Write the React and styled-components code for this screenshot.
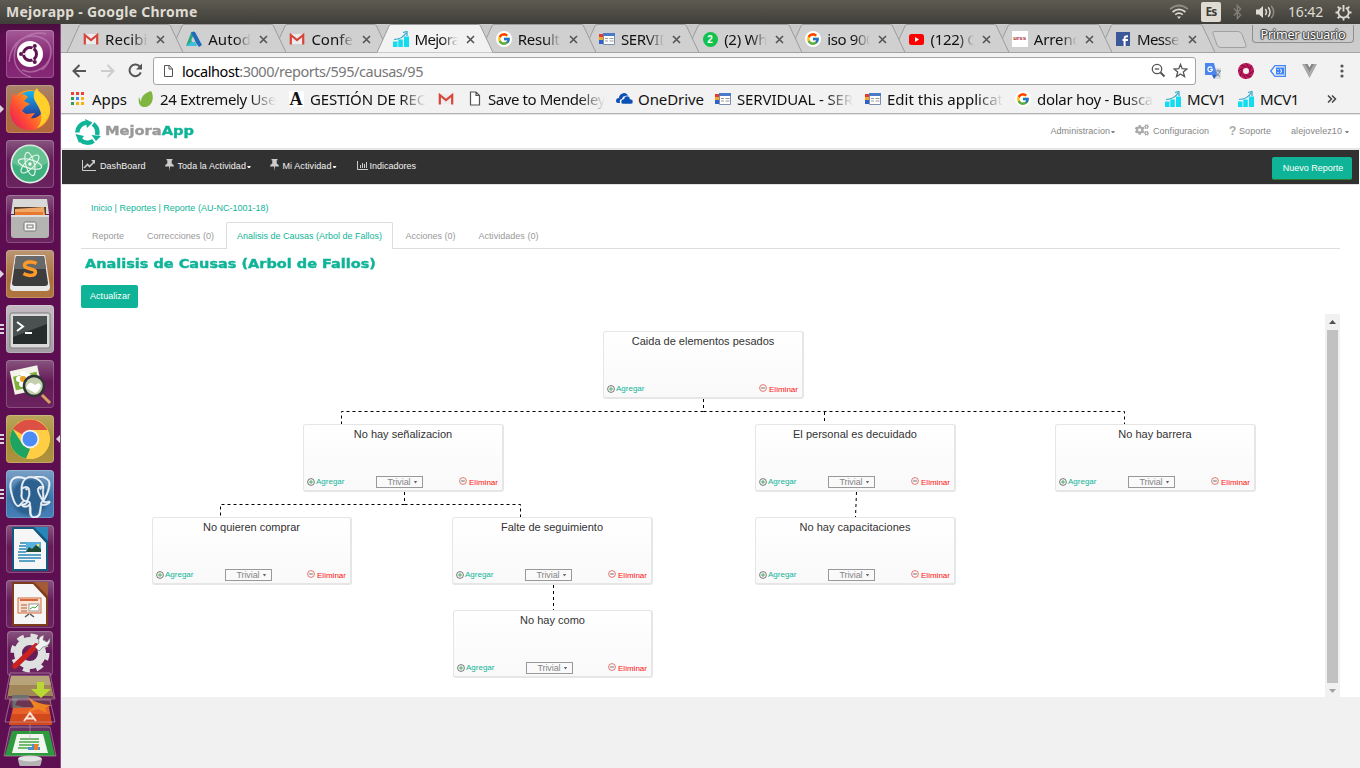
import React, { useLayoutEffect, useRef, useState } from "react";
import styled, { createGlobalStyle, css } from "styled-components";
import { FaCogs } from "react-icons/fa";
import { FcGoogle } from "react-icons/fc";
import { SiPostgresql } from "react-icons/si";

const teal = "#0fb498";
const ui = '"Noto Sans", "Open Sans", sans-serif';

const Global = createGlobalStyle`
  * { box-sizing: border-box; }
  html, body, #root { height: 100%; }
  body { margin: 0; overflow: hidden; font-family: "Liberation Sans", Arial, sans-serif; background: #f1f1f1; }
  svg { display: block; flex: none; }
`;

/* Text set to an exact width, by its letter spacing or, with `stretch`, by wider letters. */
const FitSpan = styled.span`
  display: block;
  flex: none;
  white-space: pre;
  width: ${(p) => p.$w}px;
  transform-origin: 0 50%;
`;
function Fit({ w, stretch, children }) {
  const ref = useRef(null);
  const [style, setStyle] = useState({});
  useLayoutEffect(() => {
    const range = document.createRange();
    range.selectNodeContents(ref.current);
    const natural = range.getBoundingClientRect().width;
    setStyle(
      stretch
        ? { transform: `scaleX(${w / natural})` }
        : { letterSpacing: (w - natural) / ref.current.textContent.length }
    );
  }, []);
  return (
    <FitSpan ref={ref} $w={w} style={style}>
      {children}
    </FitSpan>
  );
}

const Screen = styled.div`
  width: 1360px;
  height: 768px;
  display: flex;
  flex-direction: column;
  overflow: hidden;
`;

/* ---------- system bar ---------- */
const SystemBar = styled.header`
  height: 24px;
  flex: none;
  display: flex;
  align-items: center;
  padding: 0 8px 0 6px;
  background: linear-gradient(#5d5b51, #3f3e39);
  color: #dfdbd2;
  font: 700 14px/22px ${ui};
`;
const Tray = styled.div`
  margin-left: auto;
  display: flex;
  align-items: center;
  font-weight: 400;
  font-size: 14px;
`;
const Lang = styled.div`
  width: 20px;
  height: 20px;
  margin: 0 12px 0 12px;
  border-radius: 2px;
  background: #dfdbd2;
  color: #3d3c37;
  font: 700 12px/20px ${ui};
  display: flex;
  justify-content: center;
`;
const TrayIcons = {
  wifi: (
    <svg width="20" height="16" viewBox="0 0 20 16" fill="none" stroke="#dfdbd2" strokeWidth="1.7">
      <path d="M1 5.2Q10-2.2 19 5.2" stroke="#8f8b83" />
      <path d="M3.6 8Q10 2.6 16.4 8" />
      <path d="M6.2 10.7Q10 7.4 13.8 10.7" />
      <path d="M8 12.4h4L10 15z" fill="#dfdbd2" stroke="none" />
    </svg>
  ),
  bt: (
    <svg width="9" height="16" viewBox="0 0 9 16" fill="none" stroke="#85827a" strokeWidth="1.3">
      <path d="M.7 4.4l7 6.6-3.4 3.6V1.400L7.700 5l-7 6.400" />
    </svg>
  ),
  volume: (
    <svg width="20" height="16" viewBox="0 0 20 16" fill="none" stroke="#dfdbd2" strokeWidth="1.5">
      <path d="M0 5.5h3L7 2v12l-4-3.500H0z" fill="#dfdbd2" stroke="none" />
      <path d="M9.300 5q2.400 3 0 6M12.200 3.300q3.700 4.700 0 9.400" />
      <path d="M15.200 1.700q5 6.300 0 12.600" stroke="#8f8b83" />
    </svg>
  ),
  power: (
    <svg width="17" height="17" viewBox="-8.500 -8.500 17 17" fill="none" stroke="#dfdbd2">
      <path d="M2.200-4.800A5.200 5.200 0 1 1-2.200-4.800" strokeWidth="1.800" />
      <path d="M0-7.500V-1" strokeWidth="1.800" />
      <path d="M5.500 0H8M-5.500 0H-8M0 5.500V8M4 4l1.800 1.800M-4 4l-1.800 1.800M4-4l1.800-1.800M-4-4l-1.800-1.800" strokeWidth="1.800" />
    </svg>
  ),
};

/* ---------- launcher ---------- */
const Body = styled.div`
  flex: 1;
  min-height: 0;
  display: flex;
`;
const Launcher = styled.nav`
  width: 61px;
  flex: none;
  padding: 6px 0 0 6px;
  background: linear-gradient(#4a0d3f, #5c0d50 12px, #5e0f52);
  border-right: 1px solid #874c7e;
  display: flex;
  flex-direction: column;
  gap: 7px;
  overflow: hidden;
`;
const Tile = styled.div`
  position: relative;
  width: 48px;
  height: 48px;
  flex: none;
  border-radius: 4px;
  background: ${(p) => p.$bg || "linear-gradient(#88557f, #651a58 45%, #6b245f)"};
  box-shadow: inset 0 0 0 1px rgba(255, 255, 255, 0.2);
`;
const ShortTile = styled(Tile)`
  width: 46px;
  height: 45px;
  margin-left: 4px;
  overflow: hidden;
`;
const Running = styled.span`
  position: absolute;
  left: -6px;
  top: 20px;
  width: 4px;
  height: 8px;
  background: #ddd3dc;
  ${(p) =>
    p.$many
      ? css`background: linear-gradient(#ddd3dc 2px, transparent 2px 4px, #ddd3dc 4px 6px, transparent 6px 8px, #ddd3dc 8px);height: 10px;top: 19px;`
      : css`clip-path: polygon(0 0, 100% 50%, 0 100%);`}
`;
const Focused = styled.span`
  position: absolute;
  right: -6px;
  top: 20px;
  width: 4px;
  height: 8px;
  background: #ddd3dc;
  clip-path: polygon(100% 0, 0 50%, 100% 100%);
`;
const Art = ({ children, h = 48 }) => (
  <svg width="48" height={h} viewBox={`0 0 48 ${h}`} fill="none">
    {children}
  </svg>
);
const Stack = styled.div`
  margin: -4px 0 0 -3px;
`;
const StackArt = styled.svg`
  margin-top: -4px;
  position: relative;
`;

const ubuntuArt = (
  <Art>
    <path d="M3 32C5 10 22 2 36 8s10 24 0 32M40 4C30 1 12 6 9 20s4 24 16 27M45 22C44 36 30 46 16 40" stroke="#c58cba" strokeWidth="1.500" opacity=".6" />
    <circle cx="24" cy="24" r="13" fill="#fff" />
    <circle cx="24" cy="24" r="6.500" stroke="#5e1650" strokeWidth="3" />
    <path d="M14 24h5M28.500 16L26 20M28.500 32L26 28" stroke="#fff" strokeWidth="1.300" />
    <circle cx="15" cy="24" r="2" fill="#5e1650" />
    <circle cx="28.800" cy="16" r="2" fill="#5e1650" />
    <circle cx="28.800" cy="32" r="2" fill="#5e1650" />
  </Art>
);
const firefoxArt = (
  <Art>
    <defs>
      <linearGradient id="fx" x1="1" y1="0" x2="0" y2=".8">
        <stop offset="0" stopColor="#ffe12e" /><stop offset=".4" stopColor="#ff9a1c" /><stop offset=".75" stopColor="#ff4a35" /><stop offset="1" stopColor="#e8205c" />
      </linearGradient>
      <linearGradient id="fb" x1="0" y1="0" x2="0" y2="1">
        <stop offset="0" stopColor="#12b5f5" /><stop offset="1" stopColor="#2a2f8c" />
      </linearGradient>
    </defs>
    <circle cx="24" cy="25" r="20" fill="url(#fx)" />
    <circle cx="25" cy="20" r="14" fill="url(#fb)" />
    <path d="M5 18L7 8l4 4 7-3 4 3-4 4 6 3-5 3-3 4 4 3 9-1-4 5c4 1 10-2 11-7 3-6-1-12-4-16C31 7 31 3 31 3c1 5 12 8 13 22 0 12-9 20-20 20S4 37 4 25z" fill="url(#fx)" />
    <path d="M31 3c1 6 13 9 13 23-1 8-7 15-13 17 8-9 4-18-2-27-3-6 0-11 2-13z" fill="#ffcf2c" />
  </Art>
);
const atomArt = (
  <Art>
    <circle cx="24" cy="24" r="19.500" fill="#e1efe6" />
    <circle cx="24" cy="24" r="17.800" fill="#3fb07f" />
    <path d="M6.500 23a17.500 17.500 0 0 1 35 0Q24 34 6.500 23z" fill="#81cf9e" opacity=".6" />
    <g stroke="#e8f5ed" strokeWidth="1.100">
      <ellipse cx="24" cy="24" rx="12" ry="4.300" transform="rotate(15 24 24)" />
      <ellipse cx="24" cy="24" rx="12" ry="4.300" transform="rotate(75 24 24)" />
      <ellipse cx="24" cy="24" rx="12" ry="4.300" transform="rotate(135 24 24)" />
    </g>
    <circle cx="24" cy="24" r="1.700" fill="#fff" />
  </Art>
);
const filesArt = (
  <Art>
    <path d="M7 4h34l2 15H5z" fill="#d9d9d7" />
    <path d="M8 12h32v9H8z" fill="#553b2a" />
    <path d="M9 14l29-2 1 8H9z" fill="#f0a868" /><path d="M9 17h28v3H9z" fill="#e8782e" />
    <path d="M5 20h38v20a3 3 0 0 1-3 3H8a3 3 0 0 1-3-3z" fill="#b4b4b2" />
    <path d="M5 20h38v2H5z" fill="#dededc" />
    <rect x="18" y="27" width="12" height="9" rx="1.500" fill="#f4f4f4" stroke="#777" />
    <rect x="21" y="30" width="6" height="3" stroke="#777" />
  </Art>
);
const sublimeArt = (
  <Art>
    <path d="M9 5h30l5 32q0 4-4 4H8q-4 0-4-4z" fill="#e8e8e8" />
    <path d="M10 6h28l4 27q0 3-3 3H9q-3 0-3-3z" fill="#3d3d3d" />
    <path d="M10 6h28l2 13H8z" fill="#686868" />
    <path d="M30.500 13.500c-4-2.500-12-2-12 2 0 4 11 2.500 11 6.500 0 4.500-8 4-12 1.500" stroke="#ff9a29" strokeWidth="3.500" />
  </Art>
);
const terminalArt = (
  <Art>
    <rect x="4" y="8" width="40" height="35" rx="2" fill="#d9d9d9" stroke="#7a7a7a" />
    <rect x="7" y="11" width="34" height="28" fill="#262b2b" />
    <path d="M7 11h34v8L7 32z" fill="#4b5050" />
    <path d="M11 17l6 4.500-6 4.500M19 28h7" stroke="#fff" strokeWidth="2" />
  </Art>
);
const viewerArt = (
  <Art>
    <g transform="rotate(-12 20 20)">
      <rect x="6" y="8" width="28" height="24" fill="#f3f3ea" />
      <rect x="8" y="14" width="24" height="14" fill="#7fb13b" />
    </g>
    <g fill="#fff"><circle cx="17" cy="14" r="3" /><circle cx="13" cy="19" r="3" /><circle cx="16" cy="24" r="3" /><circle cx="22" cy="16" r="3" /></g>
    <circle cx="17" cy="19" r="3" fill="#f0a020" />
    <circle cx="28" cy="26" r="10" fill="#c5cfae" stroke="#2f3436" strokeWidth="2.500" />
    <path d="M20 28q3-8 9-3 5-4 6 1-3 7-6 7z" fill="#fff" />
    <path d="M36 35l8 8" stroke="#d9a25a" strokeWidth="3" />
  </Art>
);
const chromeArt = (
  <Art>
    <circle cx="24" cy="24" r="20" fill="#ffce44" />
    <path d="M24 24L6.700 14a20 20 0 0 1 34.600 1H24z" fill="#dd5145" />
    <path d="M6.700 14L17 30l7 4-4 9.600A20 20 0 0 1 6.700 14z" fill="#1da362" />
    <path d="M41.500 15H24l8 14-9 15a20 20 0 0 0 18.500-29z" fill="#ffce44" />
    <circle cx="24" cy="24" r="9.200" fill="#f3f3f3" />
    <circle cx="24" cy="24" r="7.500" fill="#4c8bf5" />
  </Art>
);
const docArt = (a, b, body) => (
  <Art>
    <path d="M6 2h24l12 12v32H6z" fill={a} />
    <path d="M8 4h19l13 14v26H8z" fill="#f6f6f6" />
    <path d="M28 2h14v14z" fill={b} />
    {body}
  </Art>
);
const writerArt = docArt("#14577d", "#2a86b8", (
  <>
    <path d="M14 18h6M13 21h7M13 24h7M12 27h8M12 30h23M12 33h23M13 36h16" stroke="#2a86b8" strokeWidth="1.600" />
    <rect x="20" y="17" width="15" height="10" fill="#58b1e0" />
    <path d="M20 27l3-5 3 2 4-4 5 4v3z" fill="#1f4a33" /><circle cx="32" cy="20" r="1.300" fill="#ffe050" />
  </>
));
const impressArt = docArt("#7d3c1b", "#a35a36", (
  <>
    <rect x="12" y="18" width="23" height="15" fill="#fbe3d6" stroke="#d4693c" />
    <path d="M14 20h18" stroke="#d4693c" strokeWidth="2" /><path d="M15 25h6M15 28h6M15 31h6" stroke="#a35a36" />
    <rect x="23" y="24" width="10" height="7" fill="#fff" stroke="#777" strokeWidth=".7" />
    <path d="M24 29l3-2 2 1 3-3" stroke="#49a53b" /><path d="M23 34l-4 3M24 34l4 3" stroke="#555" strokeWidth="1.500" />
  </>
));
const settingsArt = (
  <Art h={45}>
    <circle cx="23" cy="22" r="12" stroke="#dfe1e0" strokeWidth="8" />
    <circle cx="23" cy="22" r="17.500" stroke="#dfe1e0" strokeWidth="4" strokeDasharray="7 6.744" />
    <path d="M8 35L29 15" stroke="#c9221f" strokeWidth="5.500" strokeLinecap="round" />
    <path d="M28 16l4-4q-2-6 5-8l-1 5 4 2 3-4q1 8-7 9l-4 4z" fill="#f1f1f1" stroke="#777" strokeWidth=".7" />
  </Art>
);
const stackArt = (
  <StackArt width="54" height="98" viewBox="3 672 54 98">
    <path d="M11 676h38l5 22H7z" fill="#a08658" /><path d="M11 676h38l2 9H9z" fill="#b8a47a" />
    <path d="M8 696h45l-4 12H11z" fill="#6b3450" />
    <path d="M37 682h7v7h7l-10 9-10-9h6z" fill="#b9d932" />
    <path d="M12 695h16l2 4H18l-3 6 8 2h8l-2 4H13z" fill="#6d7070" />
    <path d="M13 708l36-1 3 18H9z" fill="#e8602a" /><path d="M12 714h38l2 11H9z" fill="#d2491c" />
    <path d="M28 697q10 8 24 8l-7 3 2 5-9-4-12 4 8-6z" fill="#ef8223" />
    <path d="M24 721l6-8 6 8M26 718.500h8" stroke="#fbe3d6" strokeWidth="2" fill="none" />
    <path d="M11 725h38l6 31H5z" fill="#6b2f60" />
    <path d="M12 731h37l6 25H5z" fill="#2e9a3e" /><path d="M17 734h26l5 19H12z" fill="#f1f7ee" />
    <path d="M20 739h19M19 742h20M19 745h20M18 748h12" stroke="#4aa84a" strokeWidth="1.500" />
    <path d="M28 747h4v-3h4v3h4v3H28z" fill="#4a8fd0" /><path d="M34 744h4v6h-4z" fill="#e8802a" />
    <ellipse cx="30" cy="759" rx="12" ry="3.500" fill="#e4e4e4" /><path d="M18 759q1 6 2 7h20q1-1 2-7-12 5-24 0z" fill="#b5b5b5" />
    <g fill="none" stroke="#c9a3c0" strokeWidth=".8" opacity=".7">
      <path d="M10 673h40l5 26H5zM10 700h40l5 22H5zM10 727h40l6 29H4zM30 724v16" />
    </g>
  </StackArt>
);
const brown = "linear-gradient(#a9846a, #ad6b45 60%, #b4683d)";
const launcherItems = [
  { art: ubuntuArt, bg: "linear-gradient(#a55b98, #80216f 60%, #862a77)" },
  { art: firefoxArt, bg: brown, run: 1 },
  { art: atomArt },
  { art: filesArt },
  { art: sublimeArt, bg: "linear-gradient(#bb9673, #a96f3c 60%, #b1763f)", run: 1 },
  { art: terminalArt, bg: "linear-gradient(#c4bcc2, #a39ba3)", run: 3 },
  { art: viewerArt },
  { art: chromeArt, bg: "linear-gradient(#b8a55c, #a68d35 60%, #b09240)", run: 3, focus: true },
  { pg: true, bg: "linear-gradient(#7aa0c6, #3e75ab 60%, #4680b8)", run: 3 },
  { art: writerArt },
  { art: impressArt },
];
const Elephant = styled(SiPostgresql)`
  width: 42px;
  height: 42px;
  margin: 3px;
  position: relative;
  top: 3px;
  color: #f0f4f8;
  stroke: #f0f4f8;
  stroke-width: 0.4;
  background: radial-gradient(#2c618f 55%, transparent 70%);
`;

/* ---------- browser chrome ---------- */
const Browser = styled.div`
  flex: 1;
  min-width: 0;
  display: flex;
  flex-direction: column;
  font-family: ${ui};
`;
const TabStrip = styled.div`
  height: 29px;
  flex: none;
  display: flex;
  padding-left: 6px;
  background: linear-gradient(#c9c9c9, #cdcdcd);
  border-bottom: 1px solid #a3a3a3;
  position: relative;
`;
const TabBox = styled.div`
  position: relative;
  z-index: ${(p) => p.$z};
  width: 103.200px;
  height: 29px;
  flex: none;
  display: flex;
  align-items: center;
  padding: 1px 0 0 16px;
  font-size: 15px;
  color: #111;
`;
const TabShape = styled.svg`
  position: absolute;
  left: 0;
  top: 0;
`;
const Icon16 = styled.span`
  position: relative;
  width: 16px;
  height: 16px;
  flex: none;
  display: flex;
  align-items: center;
  justify-content: center;
`;
const Faded = styled.div`
  position: relative;
  width: ${(p) => p.$w}px;
  margin-left: ${(p) => p.$ml}px;
  overflow: hidden;
  line-height: 22px;
  ${(p) => p.$fade && css`mask-image: linear-gradient(90deg, #000 calc(100% - ${p.$fade}px), transparent);`}
`;
const Close = () => (
  <CloseSvg width="9" height="9" viewBox="0 0 9 9">
    <path d="M1 1l7 7M8 1L1 8" stroke="#555" strokeWidth="1.600" />
  </CloseSvg>
);
const CloseSvg = styled.svg`
  position: relative;
  margin-left: 8px;
`;
const NewTab = styled.svg`
  margin: 7px 0 0 9px;
`;
const UserButton = styled.div`
  position: absolute;
  right: 6px;
  top: 1px;
  width: 102px;
  height: 18px;
  border: 1px solid #8e8e8e;
  border-top: 0;
  border-radius: 0 0 4px 4px;
  display: flex;
  justify-content: center;
  font: 12.500px/19px ${ui};
  color: #fff;
  text-shadow: 1px 0 1px #333, -1px 0 1px #333, 0 1px 1px #333, 0 -1px 1px #333;
`;
const Toolbar = styled.div`
  height: 34px;
  flex: none;
  display: flex;
  align-items: center;
  padding: 1px 0 0 11px;
  background: #f2f2f2;
`;
const ToolIcon = styled.span`
  width: ${(p) => p.$w}px;
  display: flex;
`;
const UrlBox = styled.div`
  width: 1043px;
  height: 28px;
  flex: none;
  display: flex;
  align-items: center;
  padding: 0 7px 0 10px;
  background: #fff;
  border: 1px solid #a5a5a5;
  border-radius: 3px;
  font-size: 14.500px;
  line-height: 24px;
  color: #777;
  b { font-weight: 400; color: #000; }
`;
const UrlText = styled.div`
  margin: 0 auto 0 9px;
`;
const Extensions = styled.div`
  display: flex;
  align-items: center;
  gap: 16px;
  margin-left: 9px;
  svg:last-child { margin-left: 7px; }
`;
const Bookmarks = styled.div`
  height: 27px;
  flex: none;
  display: flex;
  align-items: center;
  padding: 0 0 3px 9px;
  background: #f2f2f2;
  border-bottom: 1px solid #b3b3b3;
  font-size: 15px;
  color: #111;
`;
const BookmarkBox = styled.div`
  width: ${(p) => p.$w}px;
  flex: none;
  display: flex;
  align-items: center;
`;

const GoogleDot = styled.span`
  width: 16px;
  height: 16px;
  border-radius: 8px;
  background: #fff;
  display: flex;
  align-items: center;
  justify-content: center;
`;
const GlyphA = styled.span`
  width: 15px;
  height: 16px;
  background: #fff;
  color: #111;
  font: 700 18px/16px "Liberation Serif", serif;
  text-align: center;
`;
const RedLabel = styled.span`
  width: 16px;
  height: 16px;
  background: #fff;
  color: #a8202c;
  font: 700 6px/15px "Liberation Sans", sans-serif;
  text-align: center;
`;
const Badge2 = styled.span`
  width: 15px;
  height: 15px;
  border-radius: 8px;
  background: #12c24d;
  color: #fff;
  font: 700 10px/15px "Liberation Sans", sans-serif;
  text-align: center;
`;
const FbBox = styled.span`
  width: 14px;
  height: 14px;
  display: flex;
  background: #3b5998;
`;
const icons = {
  gmail: (
    <svg width="16" height="16" viewBox="0 0 16 16">
      <path d="M1 3h14v10H1z" fill="#ececec" />
      <path d="M1.800 13.500V4L8 9l6.200-5v9.500" fill="none" stroke="#d8453a" strokeWidth="2.200" />
    </svg>
  ),
  autodesk: (
    <svg width="16" height="16" viewBox="0 0 16 16">
      <path d="M0 15L5 2l3-2 1 4-4 8z" fill="#26a67e" />
      <path d="M5 1h4l7 13-3 2-3-4z" fill="#1f6bbb" />
      <path d="M0 15l5-4h4l2 4z" fill="#3bc0d9" /><path d="M5 9.500l2-4 2 5z" fill="#d0d0d0" />
    </svg>
  ),
  bars: (
    <svg width="16" height="16" viewBox="0 0 16 16">
      <path d="M0 10.500h4.500V16H0zM5.300 8.500h4.500V16H5.300zM11 5.500h5V16h-5z" fill="#12dcef" />
      <path d="M1 8.500q8 0 12-6.500M10 1.500l4-1V5" fill="none" stroke="#2ba7c9" strokeWidth="1.200" />
    </svg>
  ),
  google: (
    <GoogleDot><FcGoogle size={14} /></GoogleDot>
  ),
  servi: (
    <svg width="16" height="12" viewBox="0 0 16 12">
      <path d="M0 1h4v3H0z" fill="#e8372c" /><path d="M0 4h4v3H0z" fill="#f5a623" /><path d="M0 7h4v4H0z" fill="#2e62c9" />
      <path d="M4.500.5h11v11h-11z" fill="#fff" stroke="#7d8fae" /><path d="M4 0h12v3H4z" fill="#4a7bc8" />
      <path d="M6 5.500h3M10.500 5.500h4M6 8h3M10.500 8h4" stroke="#999" />
    </svg>
  ),
  whats: <Badge2>2</Badge2>,
  youtube: (
    <svg width="15" height="11" viewBox="0 0 15 11">
      <rect width="15" height="11" rx="2.500" fill="#f00" /><path d="M6 3l4 2.500L6 8z" fill="#fff" />
    </svg>
  ),
  arr: <RedLabel>urss</RedLabel>,
  fb: (
    <FbBox>
      <svg width="14" height="14" viewBox="0 0 14 14"><path d="M8.600 14V6.500q0-2.500 3.400-2.200M6.500 8H12" fill="none" stroke="#fff" strokeWidth="2" /></svg>
    </FbBox>
  ),
  apps: (
    <svg width="14" height="14" viewBox="0 0 14 14">
      <path d="M0 0h3v3H0zM5 0h3v3H5zM10 0h3v3h-3z" fill="#ea4335" />
      <path d="M0 5h3v3H0z" fill="#2fa052" /><path d="M5 5h3v3H5z" fill="#4285f4" /><path d="M10 5h3v3h-3zM10 10h3v3h-3zM5 10h3v3H5z" fill="#f9b10b" /><path d="M0 10h3v3H0z" fill="#2fa052" />
    </svg>
  ),
  leaf: (
    <svg width="16" height="16" viewBox="0 0 16 16">
      <path d="M13 0c3.500 5 2 16-6 16C1 16 0 11 1 6l2 5C3 5 7 2 13 0z" fill="#80b541" />
    </svg>
  ),
  a: <GlyphA>A</GlyphA>,
  doc: (
    <svg width="12" height="15" viewBox="0 0 12 15">
      <path d="M1.500 1h5.500l3.500 3.500V14h-9zM7 1v3.500h3.500" fill="#fff" stroke="#555" strokeWidth="1.200" />
    </svg>
  ),
  onedrive: (
    <svg width="17" height="11" viewBox="0 0 17 11">
      <path d="M0 8q0-3 3-3 0-4 5-5 3 0 4 3-5-1-6 3-3 0-2 4H2Q0 10 0 8z" fill="#0b51b5" />
      <path d="M5 9q0-3 3-3 0-3 3-3 3 0 3 3 3 0 3 2.500T15 11H7q-2 0-2-2z" fill="#0b51b5" stroke="#f2f2f2" strokeWidth=".5" />
    </svg>
  ),
};

const tabs = [
  ["gmail", "Recibi", 42.500], ["autodesk", "Autod", 43], ["gmail", "Confe", 41.500], ["bars", "Mejora", 45],
  ["google", "Result", 42], ["servi", "SERVID", 49], ["whats", "(2) Wh", 43], ["google", "iso 900", 47],
  ["youtube", "(122) C", 46], ["arr", "Arrend", 48], ["fb", "Messe", 42],
];
const bookmarks = [
  ["apps", "Apps", 35, 68, 21],
  ["leaf", "24 Extremely Use", 116, 150, 21],
  ["a", "GESTIÓN DE REC", 116, 150, 21],
  ["gmail", "", 0, 29, 0],
  ["doc", "Save to Mendeley", 117, 149, 20],
  ["onedrive", "OneDrive", 66, 99, 21],
  ["servi", "SERVIDUAL - SER", 116, 150, 21],
  ["servi", "Edit this applicat", 116, 150, 21],
  ["google", "dolar hoy - Busca", 116, 150, 21],
  ["bars", "MCV1", 39, 73, 21],
  ["bars", "MCV1", 39, 89, 21],
];

/* ---------- page ---------- */
const Page = styled.main`
  height: 583px;
  flex: none;
  padding-top: 1px;
  display: flex;
  flex-direction: column;
  background: #fff;
  border-top: 1px solid #e5e5e5;
  font: 9px/12px "Liberation Sans", Arial, sans-serif;
`;
const PageHeader = styled.div`
  height: 34px;
  flex: none;
  display: flex;
  align-items: center;
  padding: 0 11px 0 13px;
  border-bottom: 2px solid #e7e7e7;
  color: #858585;
`;
const Brand = styled.div`
  display: flex;
  align-items: center;
  gap: 4px;
  color: #999;
  font: 700 13px/18px "DejaVu Sans", sans-serif;
  -webkit-text-stroke: 0.4px;
  b { color: ${teal}; }
`;
const BrandText = styled.div`
  margin-top: -3px;
`;
const HeaderLinks = styled.div`
  margin: -2px 0 0 auto;
  display: flex;
  align-items: center;
  gap: 20px;
`;
const HeaderLink = styled.div`
  display: flex;
  align-items: center;
  gap: ${(p) => p.$gap ?? 1}px;
  svg { color: #aaa; margin-top: -2px; }
`;
const Question = styled.b`
  width: 7px;
  color: #aaa;
  font-size: 12px;
`;
const Caret = styled.i`
  width: 4px;
  height: 2px;
  margin-top: 2px;
  background: currentColor;
  clip-path: polygon(0 0, 100% 0, 70% 100%, 30% 100%);
`;
const MainNav = styled.div`
  height: 34px;
  flex: none;
  display: flex;
  align-items: center;
  margin: 0 1px;
  padding: 0 7px 2px 20px;
  background: #313131;
  box-shadow: 0 1px 0 #e2e2e2;
  color: #f2f2f2;
`;
const NavItem = styled.div`
  display: flex;
  align-items: center;
  gap: ${(p) => p.$gap}px;
  margin-right: ${(p) => p.$mr}px;
  svg { color: #ccc; margin-top: -2px; }
`;
const LinkText = styled.div`
  display: flex;
  align-items: center;
  gap: 1px;
`;
const Primary = styled.button`
  height: 23px;
  width: ${(p) => p.$w}px;
  padding: 0 0 1px 1px;
  display: flex;
  align-items: center;
  justify-content: center;
  border: 0;
  border-radius: 2px;
  background: ${teal};
  color: #fff;
  font: inherit;
  ${(p) => p.$edge && css`margin-left: auto; padding: 0 0 0 2px; position: relative; top: 2px; border-bottom: 1px solid #2d7c2a;`}
`;
const Content = styled.section`
  flex: 1;
  min-height: 0;
  display: flex;
  flex-direction: column;
  padding: 18px 20px 0;
`;
const Crumbs = styled.div`
  padding-left: 10px;
  color: ${teal};
`;
const PageTabs = styled.div`
  display: flex;
  height: 27px;
  margin-top: 8px;
  flex: none;
  border-bottom: 1px solid #ddd;
`;
const PageTab = styled.div`
  display: flex;
  align-items: center;
  padding: 1px 10px 0 11px;
  margin-right: ${(p) => p.$mr}px;
  color: #999;
  ${(p) => p.$on && css`
    height: 27px;
    background: #fff;
    color: ${teal};
    border: 1px solid #ddd;
    border-bottom: 0;
    border-radius: 2px 2px 0 0;
    padding: 0 10px 1px;
  `}
`;
const Title = styled.h1`
  margin: 6px 0 12px 4px;
  color: ${teal};
  font: 700 12.500px/18px "DejaVu Sans", sans-serif;
  -webkit-text-stroke: 0.4px;
`;
const CanvasRow = styled.div`
  flex: 1;
  min-height: 0;
  display: flex;
  margin-top: 6px;
`;
const Canvas = styled.div`
  position: relative;
  flex: 1;
`;
const ScrollTrack = styled.div`
  width: 15px;
  flex: none;
  display: flex;
  flex-direction: column;
  align-items: center;
  justify-content: space-between;
  padding: 6px 0 4px;
  background: #f1f1f1;
`;
const Thumb = styled.div`
  width: 11px;
  height: 353px;
  background: #c1c1c1;
`;
const Arrow = styled.i`
  width: 7px;
  height: 4px;
  background: ${(p) => (p.$down ? "#a3a3a3" : "#505050")};
  clip-path: ${(p) => (p.$down ? "polygon(0 0, 100% 0, 50% 100%)" : "polygon(50% 0, 100% 100%, 0 100%)")};
`;
const Lines = styled.svg`
  position: absolute;
  left: 0;
  top: 0;
`;
const Node = styled.article`
  position: absolute;
  left: ${(p) => p.$x - 81}px;
  top: ${(p) => p.$y - 314}px;
  width: ${(p) => p.$w || 201}px;
  height: 68px;
  padding: 3px 4px 1px 3px;
  display: flex;
  flex-direction: column;
  justify-content: space-between;
  background: linear-gradient(#fff, #f9f9f9);
  border: 1px solid #e6e6e6;
  border-right-width: 2px;
  border-bottom-width: 2px;
  border-radius: 3px;
  color: #333;
`;
const NodeTitle = styled.div`
  display: flex;
  justify-content: center;
  padding-left: 1px;
  font-size: 11px;
  line-height: 13px;
`;
const NodeActions = styled.div`
  display: flex;
  align-items: center;
  height: 14px;
  font-size: 8px;
`;
const Action = styled.div`
  display: flex;
  align-items: center;
  gap: ${(p) => (p.$danger ? 2 : 1)}px;
  color: ${(p) => (p.$danger ? "#ff1010" : teal)};
  ${(p) => p.$danger && css`
    margin-left: auto;
    svg { margin-top: -2px; }
    span { margin-top: 1px; }
  `}
`;
const Select = styled.div`
  width: 47px;
  height: 12px;
  margin-left: 31.500px;
  border: 1px solid #999;
  display: flex;
  align-items: center;
  justify-content: center;
  gap: 3px;
  padding-left: 6px;
  color: #858585;
  font-size: 9px;
  line-height: 10px;
`;
const SelectArrow = styled.i`
  width: 4px;
  height: 3px;
  background: #666;
  clip-path: polygon(0 0, 100% 0, 50% 100%);
`;

const nodes = [
  [603, 331, "Caida de elementos pesados", 142.500, false],
  [303, 424, "No hay señalizacion", 98.500, true],
  [755, 424, "El personal es decuidado", 124, true],
  [1055, 424, "No hay barrera", 73.500, true],
  [152, 517, "No quieren comprar", 97, true, 200],
  [452, 517, "Falte de seguimiento", 102, true],
  [755, 517, "No hay capacitaciones", 111, true],
  [453, 610, "No hay como", 65, true, 200],
];
const links = [
  "M703.500 399V411", "M703.500 411.500H341.500V424", "M703.500 411.500H1124.500V424", "M824.500 412V424",
  "M404.500 492V504", "M404.500 504.500H220.500V517", "M404.500 504.500H520.500V517",
  "M856.500 492L855.500 517", "M553.500 585V610",
];

const RoundSign = ({ minus }) => (
  <svg width="8" height="8" viewBox="0 0 8 8" fill="none">
    <circle cx="4" cy="4" r="3.400" stroke={minus ? "#e0564e" : "#555"} strokeWidth=".8" />
    <path d={minus ? "M2.200 4h3.600" : "M2 4h4M4 2v4"} stroke={minus ? "#444" : "#2fa044"} strokeWidth=".8" />
  </svg>
);
const Pin = () => (
  <svg width="9" height="12" viewBox="0 0 9 12" fill="currentColor">
    <path d="M1.500 0h6v1.300H6.700V4.500Q9 5.700 9 7.500H5L4.500 12 4 7.500H0Q0 5.700 2.300 4.500V1.300H1.500z" />
  </svg>
);

export default function App() {
  return (
    <Screen>
      <Global />
      <SystemBar>
        <Fit w={191.500}>Mejorapp - Google Chrome</Fit>
        <Tray>
          {TrayIcons.wifi}
          <Lang><Fit w={11}>Es</Fit></Lang>
          {TrayIcons.bt}
          <ToolIcon $w={14} />
          {TrayIcons.volume}
          <ToolIcon $w={12} />
          <Fit w={35}>16:42</Fit>
          <ToolIcon $w={12} />
          {TrayIcons.power}
        </Tray>
      </SystemBar>
      <Body>
        <Launcher>
          {launcherItems.map((it, i) => (
            <Tile key={i} $bg={it.bg}>
              {it.pg ? <Elephant /> : it.art}
              {it.run && <Running $many={it.run > 1} />}
              {it.focus && <Focused />}
            </Tile>
          ))}
          <Stack>
            <ShortTile>{settingsArt}</ShortTile>
            {stackArt}
          </Stack>
        </Launcher>
        <Browser>
          <TabStrip>
            {tabs.map(([icon, label, w], i) => (
              <TabBox key={i} $z={i === 3 ? 30 : 20 - i}>
                <TabShape width="118" height="29" viewBox="0 0 118 29">
                  <path
                    d="M0 28.500L12 2Q12.500.5 14 .5H101.500Q103 .5 103.500 2L116 28.500"
                    fill={i === 3 ? "#f2f2f2" : "#d0d0d0"}
                    stroke="#9c9c9c"
                  />
                  {i !== 3 && <path d="M0 28.500H118" stroke="#a3a3a3" />}
                </TabShape>
                <Icon16>{icons[icon]}</Icon16>
                <Faded $w={43} $ml={6} $fade={16}><Fit w={w}>{label}</Fit></Faded>
                <Close />
              </TabBox>
            ))}
            <NewTab width="36" height="18" viewBox="0 0 36 18">
              <path d="M3 .5H27q3 0 4 3L35 14q1 2.500-2 2.500H10q-3 0-4-2.500L2 2.500Q1.500.5 3 .5z" fill="#d2d2d2" stroke="#a0a0a0" />
            </NewTab>
            <UserButton><Fit w={85}>Primer usuario</Fit></UserButton>
          </TabStrip>
          <Toolbar>
            <ToolIcon $w={28}>
              <svg width="15" height="14" viewBox="0 0 15 14" fill="none" stroke="#555" strokeWidth="2"><path d="M14 7H2M7.500 1L1.500 7l6 6" /></svg>
            </ToolIcon>
            <ToolIcon $w={28}>
              <svg width="15" height="14" viewBox="0 0 15 14" fill="none" stroke="#cdcdcd" strokeWidth="2"><path d="M1 7H13M7.500 1l6 6-6 6" /></svg>
            </ToolIcon>
            <ToolIcon $w={25}>
              <svg width="15" height="15" viewBox="0 0 15 15" fill="none" stroke="#555" strokeWidth="2"><path d="M12.800 9.300a5.800 5.800 0 1 1-1.300-6" /><path d="M14 .5v6H8z" fill="#555" stroke="none" /></svg>
            </ToolIcon>
            <UrlBox>
              <svg width="9" height="12" viewBox="0 0 9 12" fill="none" stroke="#555"><path d="M.5.5h5L8.500 4v7.500h-8zM5 .5V4h3.500" /></svg>
              <UrlText><Fit w={241}><b>localhost</b>:3000/reports/595/causas/95</Fit></UrlText>
              <ToolIcon $w={22}>
                <svg width="15" height="15" viewBox="0 0 15 15" fill="none" stroke="#555" strokeWidth="1.300"><circle cx="6" cy="6" r="4.700" /><path d="M3.800 6h4.400" /><path d="M9.500 9.500L13.500 13.500" strokeWidth="1.900" /></svg>
              </ToolIcon>
              <svg width="15" height="15" viewBox="0 0 15 15" fill="none" stroke="#555" strokeWidth="1.300"><path d="M7.500 1.400l1.700 4.300 4.700.3-3.600 3 1.200 4.600-4-2.600-4 2.600L4.700 9 1.100 6l4.700-.3z" /></svg>
            </UrlBox>
            <Extensions>
              <svg width="17" height="16" viewBox="0 0 17 16">
                <path d="M8 5h8v11H9z" fill="#ddd" /><path d="M0 0h9l3 12H0z" fill="#4a85ee" /><path d="M7 12h5l-3 4z" fill="#2f5fc0" />
                <path d="M7 4.800A2.300 2.300 0 1 0 7.500 6.300H5.300" fill="none" stroke="#fff" strokeWidth="1.200" />
                <path d="M10 8h6M13 6.500V8M15 8q-1 4-4.500 5.500M11 9q1 3 4 4.500" fill="none" stroke="#7089a8" />
              </svg>
              <svg width="16" height="16" viewBox="-8 -8 16 16">
                <circle r="8" fill="#c4185c" /><path d="M0-8L3-3M8 0L3 3M0 8L-3 3M-8 0l5-3M5.500-5.500L3 0M5 6L0 4M-6 5L-4 0M-5-6L0-4" stroke="#6b1239" strokeWidth="1" /><circle r="3" fill="#f2f2f2" />
              </svg>
              <svg width="16" height="12" viewBox="0 0 16 12" fill="none" stroke="#4285f4">
                <path d="M.7 6L5 .7h10.300v10.600H5z" strokeWidth="1.300" /><rect x="6" y="2.500" width="8" height="7" fill="#4285f4" stroke="none" /><path d="M8 4v1M8 7v1M10.500 3.800Q12.500 6 10.500 8.200" stroke="#fff" />
              </svg>
              <svg width="15" height="14" viewBox="0 0 15 14"><path d="M0 0h5l2.500 4L10 0h5L7.500 14z" fill="#aaa" /><path d="M3 0h2.500l2 3.500 2-3.500H12L7.500 8z" fill="#858585" /></svg>
              <svg width="4" height="14" viewBox="0 0 4 14" fill="#555"><circle cx="2" cy="2" r="1.600" /><circle cx="2" cy="7" r="1.600" /><circle cx="2" cy="12" r="1.600" /></svg>
            </Extensions>
          </Toolbar>
          <Bookmarks>
            {bookmarks.map(([icon, label, w, slot, lead], i) => (
              <BookmarkBox key={i} $w={slot}>
                <Icon16>{icons[icon]}</Icon16>
                {label && (
                  <Faded $w={w} $ml={lead - 15} $fade={w > 100 ? 26 : 0}><Fit w={w}>{label}</Fit></Faded>
                )}
              </BookmarkBox>
            ))}
            <svg width="10" height="8" viewBox="0 0 10 8" fill="none" stroke="#444" strokeWidth="1.500"><path d="M1 .5L4.500 4 1 7.500M5 .5L8.500 4 5 7.500" /></svg>
          </Bookmarks>
          <Page>
            <PageHeader>
              <Brand>
                <svg width="27" height="28" viewBox="0 0 27 28" fill={teal}>
                  <g fill="none" stroke={teal} strokeWidth="4.500">
                    <path d="M3.300 14.500A10 10 0 0 1 12 4.800" /><path d="M19 6A10.500 10.500 0 0 1 23 17" /><path d="M19.500 22.800A10.500 10.500 0 0 1 6 21.500" />
                  </g>
                  <path d="M11 1l7.500 3.500L13 10zM17.500 17L27 18l-5 5zM1.500 16l8.500 2-5 7z" />
                </svg>
                <BrandText><Fit w={89} stretch>Mejora<b>App</b></Fit></BrandText>
              </Brand>
              <HeaderLinks>
                <HeaderLink><Fit w={59.500}>Administracion</Fit><Caret /></HeaderLink>
                <HeaderLink $gap={4}><FaCogs size={14} /><Fit w={56}>Configuracion</Fit></HeaderLink>
                <HeaderLink $gap={3}><Question>?</Question><Fit w={32}>Soporte</Fit></HeaderLink>
                <HeaderLink $gap={3}><Fit w={51}>alejovelez10</Fit><Caret /></HeaderLink>
              </HeaderLinks>
            </PageHeader>
            <MainNav>
              <NavItem $gap={4} $mr={19}>
                <svg width="14" height="12" viewBox="0 0 14 12" fill="none" stroke="currentColor"><path d="M.5 1v10.500H14" /><path d="M2 9l3.500-3.500 2 2L12 3" strokeWidth="1.600" /><path d="M9 1h4v4z" fill="currentColor" stroke="none" /></svg>
                <Fit w={45.500}>DashBoard</Fit>
              </NavItem>
              <NavItem $gap={4} $mr={18.500}><Pin /><LinkText><Fit w={68.500}>Toda la Actividad</Fit><Caret /></LinkText></NavItem>
              <NavItem $gap={4} $mr={20}><Pin /><LinkText><Fit w={49}>Mi Actividad</Fit><Caret /></LinkText></NavItem>
              <NavItem $gap={2} $mr={0}>
                <svg width="11" height="9" viewBox="0 0 11 9" fill="none" stroke="currentColor"><path d="M.5 0v8.500H11M3.500 7V4M5.500 7V2M7.500 7V3M9.500 7V1" /></svg>
                <Fit w={46.500}>Indicadores</Fit>
              </NavItem>
              <Primary $w={80} $edge><Fit w={60.500}>Nuevo Reporte</Fit></Primary>
            </MainNav>
            <Content>
              <Crumbs><Fit w={177.500}>Inicio | Reportes | Reporte (AU-NC-1001-18)</Fit></Crumbs>
              <PageTabs>
                <PageTab $mr={2}><Fit w={32}>Reporte</Fit></PageTab>
                <PageTab $mr={2}><Fit w={67}>Correcciones (0)</Fit></PageTab>
                <PageTab $on $mr={1.500}><Fit w={145}>Analisis de Causas (Arbol de Fallos)</Fit></PageTab>
                <PageTab $mr={2}><Fit w={50}>Acciones (0)</Fit></PageTab>
                <PageTab $mr={0}><Fit w={60}>Actividades (0)</Fit></PageTab>
              </PageTabs>
              <Title><Fit w={291} stretch>Analisis de Causas (Arbol de Fallos)</Fit></Title>
              <Primary $w={57}><Fit w={40}>Actualizar</Fit></Primary>
              <CanvasRow>
                <Canvas>
                  <Lines width="1244" height="383" viewBox="81 314 1244 383" fill="none" stroke="#000" strokeDasharray="3 3">
                    {links.map((d) => <path key={d} d={d} />)}
                  </Lines>
                  {nodes.map(([x, y, title, w, select, width]) => (
                    <Node key={title} $x={x} $y={y} $w={width}>
                      <NodeTitle><Fit w={w}>{title}</Fit></NodeTitle>
                      <NodeActions>
                        <Action><RoundSign /><Fit w={28.500}>Agregar</Fit></Action>
                        {select && <Select><Fit w={23}>Trivial</Fit><SelectArrow /></Select>}
                        <Action $danger><RoundSign minus /><Fit w={29}>Eliminar</Fit></Action>
                      </NodeActions>
                    </Node>
                  ))}
                </Canvas>
                <ScrollTrack><Arrow /><Thumb /><Arrow $down /></ScrollTrack>
              </CanvasRow>
            </Content>
          </Page>
        </Browser>
      </Body>
    </Screen>
  );
}
